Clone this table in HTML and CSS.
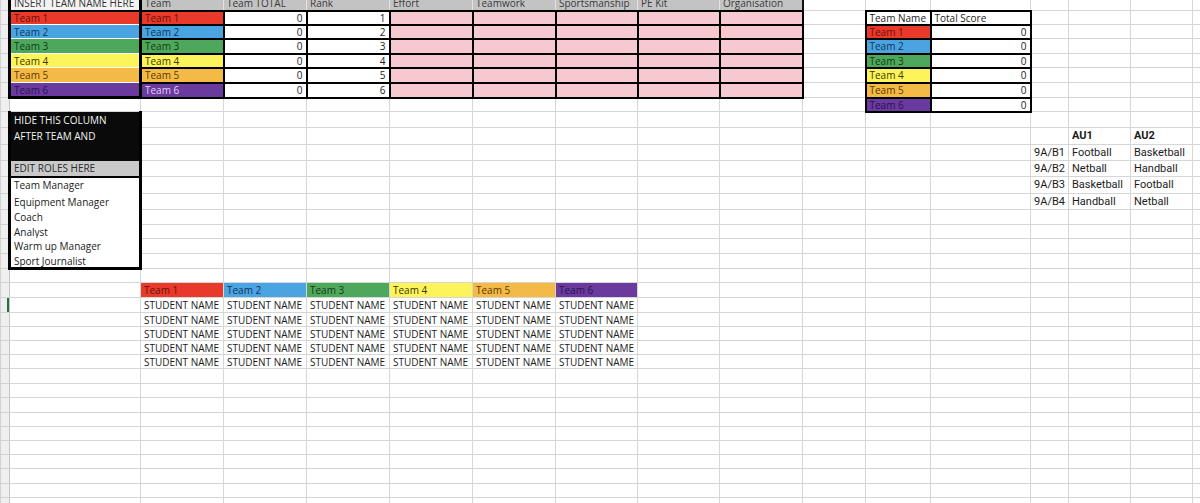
FILE: index.html
```html
<!DOCTYPE html>
<html>
<head>
<meta charset="utf-8">
<title>Team sheet</title>
<link rel="stylesheet" href="styles.css">
</head>
<body>
<table class="sheet">
<colgroup>
<col class="c-rh"><col class="c-a"><col class="c-83"><col class="c-83"><col class="c-83"><col class="c-83"><col class="c-83"><col class="c-82"><col class="c-82"><col class="c-83"><col class="c-j"><col class="c-k"><col class="c-l"><col class="c-m"><col class="c-n"><col class="c-n"><col class="c-p">
</colgroup>
<tbody>
<tr class="h14"><td class="rh"></td><td class="ca cab2 a1">INSERT TEAM NAME HERE</td><td class="hd">Team</td><td class="hd">Team TOTAL</td><td class="hd">Rank</td><td class="hd">Effort</td><td class="hd">Teamwork</td><td class="hd">Sportsmanship</td><td class="hd">PE Kit</td><td class="hd hdr">Organisation</td><td></td><td></td><td></td><td></td><td></td><td></td><td></td></tr>
<tr class="h14"><td class="rh"></td><td class="ca t1">Team 1</td><td class="bx t1">Team 1</td><td class="bx num">0</td><td class="bx num">1</td><td class="bx pk"></td><td class="bx pk"></td><td class="bx pk"></td><td class="bx pk"></td><td class="bx pk"></td><td></td><td class="bx">Team Name</td><td class="bx">Total Score</td><td></td><td></td><td></td><td></td></tr>
<tr class="h14"><td class="rh"></td><td class="ca t2">Team 2</td><td class="bx t2">Team 2</td><td class="bx num">0</td><td class="bx num">2</td><td class="bx pk"></td><td class="bx pk"></td><td class="bx pk"></td><td class="bx pk"></td><td class="bx pk"></td><td></td><td class="bx t1">Team 1</td><td class="bx num">0</td><td></td><td></td><td></td><td></td></tr>
<tr class="h15"><td class="rh"></td><td class="ca t3">Team 3</td><td class="bx t3">Team 3</td><td class="bx num">0</td><td class="bx num">3</td><td class="bx pk"></td><td class="bx pk"></td><td class="bx pk"></td><td class="bx pk"></td><td class="bx pk"></td><td></td><td class="bx t2">Team 2</td><td class="bx num">0</td><td></td><td></td><td></td><td></td></tr>
<tr class="h14"><td class="rh"></td><td class="ca t4">Team 4</td><td class="bx t4">Team 4</td><td class="bx num">0</td><td class="bx num">4</td><td class="bx pk"></td><td class="bx pk"></td><td class="bx pk"></td><td class="bx pk"></td><td class="bx pk"></td><td></td><td class="bx t3">Team 3</td><td class="bx num">0</td><td></td><td></td><td></td><td></td></tr>
<tr class="h15"><td class="rh"></td><td class="ca t5">Team 5</td><td class="bx t5">Team 5</td><td class="bx num">0</td><td class="bx num">5</td><td class="bx pk"></td><td class="bx pk"></td><td class="bx pk"></td><td class="bx pk"></td><td class="bx pk"></td><td></td><td class="bx t4">Team 4</td><td class="bx num">0</td><td></td><td></td><td></td><td></td></tr>
<tr class="h15"><td class="rh"></td><td class="ca cab3 t6">Team 6</td><td class="bx t6 lav">Team 6</td><td class="bx num">0</td><td class="bx num">6</td><td class="bx pk"></td><td class="bx pk"></td><td class="bx pk"></td><td class="bx pk"></td><td class="bx pk"></td><td></td><td class="bx t5">Team 5</td><td class="bx num">0</td><td></td><td></td><td></td><td></td></tr>
<tr class="h14"><td class="rh"></td><td></td><td></td><td></td><td></td><td></td><td></td><td></td><td></td><td></td><td></td><td class="bx t6">Team 6</td><td class="bx num">0</td><td></td><td></td><td></td><td></td></tr>
<tr class="h16"><td class="rh"></td><td class="ca blk">HIDE THIS COLUMN</td><td></td><td></td><td></td><td></td><td></td><td></td><td></td><td></td><td></td><td></td><td></td><td></td><td></td><td></td><td></td></tr>
<tr class="h17"><td class="rh"></td><td class="ca blk">AFTER TEAM AND</td><td></td><td></td><td></td><td></td><td></td><td></td><td></td><td></td><td></td><td></td><td></td><td></td><td class="au b">AU1</td><td class="au b">AU2</td><td></td></tr>
<tr class="h16"><td class="rh"></td><td class="ca blk"></td><td></td><td></td><td></td><td></td><td></td><td></td><td></td><td></td><td></td><td></td><td></td><td class="au num">9A/B1</td><td class="au">Football</td><td class="au">Basketball</td><td></td></tr>
<tr class="h16"><td class="rh"></td><td class="ca er">EDIT ROLES HERE</td><td></td><td></td><td></td><td></td><td></td><td></td><td></td><td></td><td></td><td></td><td></td><td class="au num">9A/B2</td><td class="au">Netball</td><td class="au">Handball</td><td></td></tr>
<tr class="h17"><td class="rh"></td><td class="ca">Team Manager</td><td></td><td></td><td></td><td></td><td></td><td></td><td></td><td></td><td></td><td></td><td></td><td class="au num">9A/B3</td><td class="au">Basketball</td><td class="au">Football</td><td></td></tr>
<tr class="h16"><td class="rh"></td><td class="ca">Equipment Manager</td><td></td><td></td><td></td><td></td><td></td><td></td><td></td><td></td><td></td><td></td><td></td><td class="au num">9A/B4</td><td class="au">Handball</td><td class="au">Netball</td><td></td></tr>
<tr class="h15"><td class="rh"></td><td class="ca">Coach</td><td></td><td></td><td></td><td></td><td></td><td></td><td></td><td></td><td></td><td></td><td></td><td></td><td></td><td></td><td></td></tr>
<tr class="h14"><td class="rh"></td><td class="ca">Analyst</td><td></td><td></td><td></td><td></td><td></td><td></td><td></td><td></td><td></td><td></td><td></td><td></td><td></td><td></td><td></td></tr>
<tr class="h15"><td class="rh"></td><td class="ca">Warm up Manager</td><td></td><td></td><td></td><td></td><td></td><td></td><td></td><td></td><td></td><td></td><td></td><td></td><td></td><td></td><td></td></tr>
<tr class="h15"><td class="rh"></td><td class="ca cab3">Sport Journalist</td><td></td><td></td><td></td><td></td><td></td><td></td><td></td><td></td><td></td><td></td><td></td><td></td><td></td><td></td><td></td></tr>
<tr class="h14"><td class="rh"></td><td></td><td></td><td></td><td></td><td></td><td></td><td></td><td></td><td></td><td></td><td></td><td></td><td></td><td></td><td></td><td></td></tr>
<tr class="h15"><td class="rh"></td><td></td><td class="t1">Team 1</td><td class="t2">Team 2</td><td class="t3">Team 3</td><td class="t4">Team 4</td><td class="t5">Team 5</td><td class="t6">Team 6</td><td></td><td></td><td></td><td></td><td></td><td></td><td></td><td></td><td></td></tr>
<tr class="h14"><td class="rh"><span class="sel"></span></td><td></td><td>STUDENT NAME</td><td>STUDENT NAME</td><td>STUDENT NAME</td><td>STUDENT NAME</td><td>STUDENT NAME</td><td>STUDENT NAME</td><td></td><td></td><td></td><td></td><td></td><td></td><td></td><td></td><td></td></tr>
<tr class="h14"><td class="rh"></td><td></td><td>STUDENT NAME</td><td>STUDENT NAME</td><td>STUDENT NAME</td><td>STUDENT NAME</td><td>STUDENT NAME</td><td>STUDENT NAME</td><td></td><td></td><td></td><td></td><td></td><td></td><td></td><td></td><td></td></tr>
<tr class="h14"><td class="rh"></td><td></td><td>STUDENT NAME</td><td>STUDENT NAME</td><td>STUDENT NAME</td><td>STUDENT NAME</td><td>STUDENT NAME</td><td>STUDENT NAME</td><td></td><td></td><td></td><td></td><td></td><td></td><td></td><td></td><td></td></tr>
<tr class="h14"><td class="rh"></td><td></td><td>STUDENT NAME</td><td>STUDENT NAME</td><td>STUDENT NAME</td><td>STUDENT NAME</td><td>STUDENT NAME</td><td>STUDENT NAME</td><td></td><td></td><td></td><td></td><td></td><td></td><td></td><td></td><td></td></tr>
<tr class="h14"><td class="rh"></td><td></td><td>STUDENT NAME</td><td>STUDENT NAME</td><td>STUDENT NAME</td><td>STUDENT NAME</td><td>STUDENT NAME</td><td>STUDENT NAME</td><td></td><td></td><td></td><td></td><td></td><td></td><td></td><td></td><td></td></tr>
<tr class="h15"><td class="rh"></td><td></td><td></td><td></td><td></td><td></td><td></td><td></td><td></td><td></td><td></td><td></td><td></td><td></td><td></td><td></td><td></td></tr>
<tr class="h14"><td class="rh"></td><td></td><td></td><td></td><td></td><td></td><td></td><td></td><td></td><td></td><td></td><td></td><td></td><td></td><td></td><td></td><td></td></tr>
<tr class="h15"><td class="rh"></td><td></td><td></td><td></td><td></td><td></td><td></td><td></td><td></td><td></td><td></td><td></td><td></td><td></td><td></td><td></td><td></td></tr>
<tr class="h14"><td class="rh"></td><td></td><td></td><td></td><td></td><td></td><td></td><td></td><td></td><td></td><td></td><td></td><td></td><td></td><td></td><td></td><td></td></tr>
<tr class="h14"><td class="rh"></td><td></td><td></td><td></td><td></td><td></td><td></td><td></td><td></td><td></td><td></td><td></td><td></td><td></td><td></td><td></td><td></td></tr>
<tr class="h14"><td class="rh"></td><td></td><td></td><td></td><td></td><td></td><td></td><td></td><td></td><td></td><td></td><td></td><td></td><td></td><td></td><td></td><td></td></tr>
<tr class="h14"><td class="rh"></td><td></td><td></td><td></td><td></td><td></td><td></td><td></td><td></td><td></td><td></td><td></td><td></td><td></td><td></td><td></td><td></td></tr>
<tr class="h15"><td class="rh"></td><td></td><td></td><td></td><td></td><td></td><td></td><td></td><td></td><td></td><td></td><td></td><td></td><td></td><td></td><td></td><td></td></tr>
<tr class="h14"><td class="rh"></td><td></td><td></td><td></td><td></td><td></td><td></td><td></td><td></td><td></td><td></td><td></td><td></td><td></td><td></td><td></td><td></td></tr>
<tr class="h14"><td class="rh"></td><td></td><td></td><td></td><td></td><td></td><td></td><td></td><td></td><td></td><td></td><td></td><td></td><td></td><td></td><td></td><td></td></tr>
</tbody>
</table>
</body>
</html>
```
FILE: styles.css
```css
html, body {
  margin: 0;
  padding: 0;
  background: #ffffff;
  overflow: hidden;
}
body {
  font-family: "Open Sans", "Liberation Sans", sans-serif;
  font-size: 10px;
  color: #1a1a1a;
}
.sheet {
  border-collapse: collapse;
  table-layout: fixed;
  width: 1212px;
  margin-top: -4px;
}
.c-rh { width: 9px; }
.c-a { width: 131px; }
.c-83 { width: 83px; }
.c-82 { width: 82px; }
.c-j { width: 63px; }
.c-k { width: 65px; }
.c-l { width: 100px; }
.c-m { width: 38px; }
.c-n { width: 62px; }
.c-p { width: 20px; }

.h14 { height: 14px; }
.h15 { height: 15px; }
.h16 { height: 16px; }
.h17 { height: 17px; }

.sheet td {
  border: 1px solid #d6d6d6;
  padding: 0 3px;
  white-space: nowrap;
  overflow: hidden;
  vertical-align: middle;
  line-height: 12px;
}
.sheet td.rh {
  background: #efefef;
  border-color: #d2d2d2;
  border-right-color: #c4c4c4;
  padding: 0;
}
.sel {
  display: block;
  width: 2px;
  height: 14px;
  margin-left: 6px;
  background: #1f7244;
}
.sheet td.hd {
  background: #c3c3c3;
  color: #3a3a3a;
  border-color: #e2e2e2;
}
.sheet td.hdr { border-right: 2px solid #111; }
.sheet td.a1 { background: #f3f3f3; color: #333; }

.sheet td.ca {
  border-left: 3px solid #000;
  border-right: 3px solid #000;
  border-top-color: transparent;
  border-bottom-color: transparent;
}
.sheet td.cab2 { border-bottom: 2px solid #000; }
.sheet td.cab3 { border-bottom: 3px solid #000; }
.sheet td.blk {
  background: #0a0a0a;
  color: #f2f2f2;
  border-top-color: #0a0a0a;
  border-bottom-color: #0a0a0a;
}
.sheet td.er {
  background: #c9c9c9;
  color: #2a2a2a;
  border-bottom: 2px solid #000;
}

.sheet td.bx { border: 2px solid #000; }
.sheet td.pk { background: #f6c8d0; }
.sheet td.num { text-align: right; }

.sheet td.t1 { background: #e8392b; color: #6c1209; }
.sheet td.t2 { background: #4aa4e2; color: #0d3558; }
.sheet td.t3 { background: #4ea85b; color: #103c19; }
.sheet td.t4 { background: #fdf45b; color: #3a3700; }
.sheet td.t5 { background: #f4ba46; color: #5a3a00; }
.sheet td.t6 { background: #6a3a9f; color: #2c1150; }
.sheet td.lav { color: #e0d2f6; }

.sheet td.au {
  font-family: Roboto, "Liberation Sans", sans-serif;
  font-size: 11px;
  color: #1b1b1b;
}
.sheet td.b { font-weight: 700; }
```
